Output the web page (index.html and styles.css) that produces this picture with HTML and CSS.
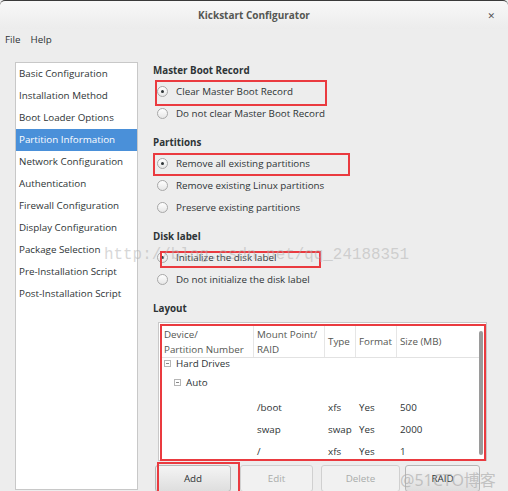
FILE: index.html
```html
<!DOCTYPE html>
<html>
<head>
<meta charset="utf-8">
<link rel="stylesheet" href="styles.css">
</head>
<body>
<div class="window">
  <div class="titlebar">
    <span class="title">Kickstart Configurator</span>
    <span class="close">&#x2715;</span>
  </div>
  <div class="menubar">
    <span class="menu">File</span>
    <span class="menu">Help</span>
  </div>
  <div class="main">
    <ul class="sidebar">
      <li>Basic Configuration</li>
      <li>Installation Method</li>
      <li>Boot Loader Options</li>
      <li class="selected">Partition Information</li>
      <li>Network Configuration</li>
      <li>Authentication</li>
      <li>Firewall Configuration</li>
      <li>Display Configuration</li>
      <li>Package Selection</li>
      <li>Pre-Installation Script</li>
      <li>Post-Installation Script</li>
    </ul>
    <div class="content">
      <section class="group">
        <h3>Master Boot Record</h3>
        <label class="radio"><span class="dot checked"></span>Clear Master Boot Record</label>
        <label class="radio"><span class="dot"></span>Do not clear Master Boot Record</label>
      </section>
      <section class="group">
        <h3>Partitions</h3>
        <label class="radio"><span class="dot checked"></span>Remove all existing partitions</label>
        <label class="radio"><span class="dot"></span>Remove existing Linux partitions</label>
        <label class="radio"><span class="dot"></span>Preserve existing partitions</label>
      </section>
      <section class="group">
        <h3>Disk label</h3>
        <label class="radio"><span class="dot checked"></span>Initialize the disk label</label>
        <label class="radio"><span class="dot"></span>Do not initialize the disk label</label>
      </section>
      <section class="group layout">
        <h3>Layout</h3>
        <div class="tablebox">
          <div class="table">
            <div class="row head">
              <div class="c c1">Device/<br>Partition Number</div>
              <div class="c c2">Mount Point/<br>RAID</div>
              <div class="c c3">Type</div>
              <div class="c c4">Format</div>
              <div class="c c5">Size (MB)</div>
            </div>
            <div class="row r-hd"><div class="c tree0"><span class="exp"></span>Hard Drives</div></div>
            <div class="row r-auto"><div class="c tree1"><span class="exp"></span>Auto</div></div>
            <div class="row"><div class="c c1"></div><div class="c c2">/boot</div><div class="c c3">xfs</div><div class="c c4">Yes</div><div class="c c5">500</div></div>
            <div class="row"><div class="c c1"></div><div class="c c2">swap</div><div class="c c3">swap</div><div class="c c4">Yes</div><div class="c c5">2000</div></div>
            <div class="row"><div class="c c1"></div><div class="c c2">/</div><div class="c c3">xfs</div><div class="c c4">Yes</div><div class="c c5">1</div></div>
          </div>
          <div class="scrollbar"></div>
        </div>
        <div class="buttons">
          <button class="btn b-add">Add</button>
          <button class="btn b-edit" disabled>Edit</button>
          <button class="btn b-del" disabled>Delete</button>
          <button class="btn b-raid">RAID</button>
        </div>
      </section>
    </div>
  </div>

  <div class="mark m1"></div>
  <div class="mark m2"></div>
  <div class="mark m3"></div>
  <div class="mark m4"></div>
  <div class="mark m5"></div>
  <div class="wm wm1">http://blog.csdn.net/qq_24188351</div>
  <div class="wm wm2">@51CTO博客</div>
</div>
</body>
</html>
```

FILE: styles.css
```css
* { box-sizing: border-box; }
html, body { margin: 0; padding: 0; }
body {
  width: 508px;
  height: 491px;
  overflow: hidden;
  background: #ededed;
  font-family: "Open Sans", "DejaVu Sans", sans-serif;
  font-size: 9.8px;
  color: #2e3436;
}
.window {
  position: relative;
  width: 508px;
  height: 491px;
  background: #ededed;
}
.titlebar {
  position: relative;
  height: 29px;
  border-top: 1px solid #3a3a3a;
  border-radius: 5px 5px 0 0;
  background: linear-gradient(#f8f8f8, #ececec);
  display: flex;
  align-items: center;
  justify-content: center;
}
.title {
  font-weight: 700;
  font-size: 10px;
  color: #555753;
}
.close {
  position: absolute;
  right: 13px;
  top: 8px;
  font-size: 9px;
  font-weight: 700;
  color: #555;
}
.menubar {
  height: 21px;
  display: flex;
  align-items: center;
  gap: 10px;
  padding-left: 5px;
}
.menu { color: #2e3436; }
.main {
  display: flex;
  padding-left: 15px;
  padding-top: 12px;
}
.sidebar {
  list-style: none;
  margin: 0;
  padding: 0;
  width: 123px;
  height: 428px;
  background: #fff;
  border: 1px solid #c8c8c8;
}
.sidebar li {
  height: 22px;
  line-height: 22px;
  padding-left: 3px;
  white-space: nowrap;
}
.sidebar li.selected {
  background: #4a90d9;
  color: #fff;
}
.content {
  margin-left: 15px;
  width: 336px;
}
.group { margin-bottom: 10px; }
.group h3 {
  margin: 0;
  font-size: 9.8px;
  font-weight: 700;
  height: 18px;
  line-height: 18px;
  color: #2e3436;
}
.radio {
  display: flex;
  align-items: center;
  height: 22px;
  padding-left: 4px;
}
.dot {
  width: 11px;
  height: 11px;
  border-radius: 50%;
  border: 1px solid #a8a8a8;
  background: linear-gradient(#ffffff, #e6e6e6);
  margin-right: 8px;
  position: relative;
  flex: none;
}
.dot.checked::after {
  content: "";
  position: absolute;
  left: 3px;
  top: 3px;
  width: 3px;
  height: 3px;
  border-radius: 50%;
  background: #2e3436;
}
.layout h3 { margin-bottom: 4px; }
.tablebox {
  position: relative;
  margin-left: 5px;
  width: 329px;
  height: 139px;
  overflow: hidden;
  background: #fff;
  border: 1px solid #c8c8c8;
  padding: 3px 3px 0 3px;
}
.row {
  display: flex;
  height: 22px;
  align-items: center;
}
.row.head {
  height: 32px;
  border-bottom: 1px solid #e2e2e2;
  color: #555753;
}
.row.head .c {
  height: 100%;
  display: flex;
  align-items: center;
  border-right: 1px solid #e6e6e6;
  line-height: 15px;
}
.row.head .c5 { border-right: none; }
.c { padding-left: 2px; white-space: nowrap; }
.c1 { width: 92px; }
.c2 { width: 71px; padding-left: 3px; }
.c3 { width: 31px; padding-left: 3px; }
.c4 { width: 41px; padding-left: 3px; }
.c5 { width: 80px; padding-left: 3px; }
.row.head .c1, .row.head .c2 { display: block; padding-top: 1px; }
.row.r-hd { height: 11px; }
.row.r-auto { height: 27px; }
.tree0, .tree1 { display: flex; align-items: center; }
.tree1 { padding-left: 12px; }
.exp {
  width: 7px;
  height: 7px;
  border: 1px solid #b5b5b5;
  position: relative;
  margin-right: 5px;
}
.exp::after {
  content: "";
  position: absolute;
  left: 1px;
  top: 2px;
  width: 3px;
  height: 1px;
  background: #888;
}
.scrollbar {
  position: absolute;
  right: 3px;
  top: 8px;
  width: 4px;
  height: 124px;
  border-radius: 2px;
  background: #9a9a9a;
}
.buttons {
  display: flex;
  margin-top: 4px;
  margin-left: 2px;
}
.btn {
  font-family: inherit;
  font-size: 9.8px;
  height: 27px;
  border: 1px solid #b6b6b6;
  border-radius: 3px;
  background: linear-gradient(#f4f4f4, #dedede);
  color: #2e3436;
  padding: 0;
  flex: none;
}
.b-add { width: 76px; }
.b-edit { width: 73px; margin-left: 9px; }
.b-del { width: 79px; margin-left: 8px; }
.b-raid { width: 75px; margin-left: 5px; }
.btn:disabled {
  color: #a9acaa;
  background: #f1f1f1;
  border-color: #d0d0d0;
}
.mark {
  position: absolute;
  border: 2px solid #ea3a3f;
}
.m1 { left: 155px; top: 80px; width: 172px; height: 26px; }
.m2 { left: 153px; top: 153px; width: 197px; height: 23px; }
.m3 { left: 160px; top: 251px; width: 161px; height: 17px; }
.m4 { left: 160px; top: 324px; width: 326px; height: 137px; }
.m5 { left: 157px; top: 462px; width: 83px; height: 40px; }
.wm {
  position: absolute;
  pointer-events: none;
  white-space: nowrap;
}
.wm1 {
  left: 104px;
  top: 246px;
  font-family: "Liberation Mono", monospace;
  font-size: 15.9px;
  color: rgba(175, 175, 175, 0.5);
}
.wm2 {
  left: 400px;
  top: 467px;
  font-family: "Noto Sans", "Noto Sans CJK SC", sans-serif;
  font-size: 16px;
  color: rgba(175, 175, 175, 0.7);
}
```
